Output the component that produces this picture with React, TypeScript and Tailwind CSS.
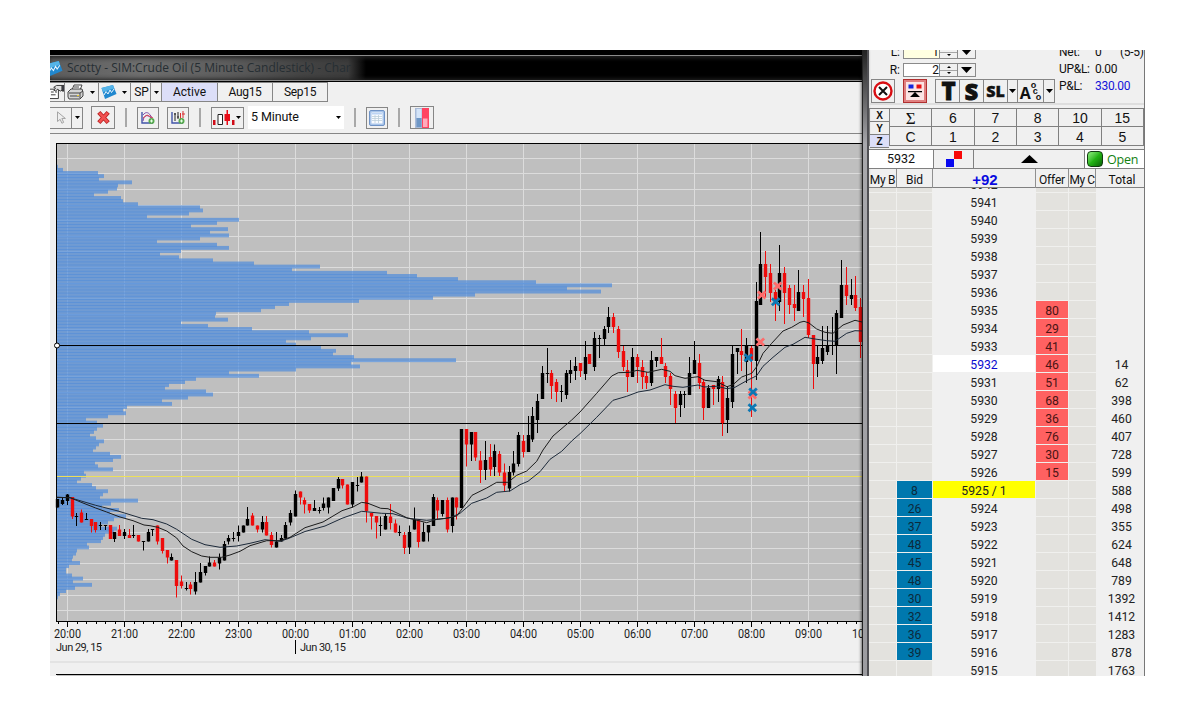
import type { ReactNode } from 'react';

// [high, body top, body bottom, low, 1 = down candle]
type Candle = [number, number, number, number, number];

const candles: Candle[] = [
  [499, 499, 507.5, 507.5, 0], [497, 500, 504, 505, 0], [494, 494.5, 501, 505, 0], [497, 497, 516.5, 519, 1],
  [513, 516, 517, 526, 0], [509.5, 512.5, 522.5, 522.5, 1], [513, 519, 520, 520, 0], [519, 519, 526, 532.5, 1],
  [522, 522, 530, 532.5, 1], [522, 525, 526, 530, 0], [525, 525, 526, 530, 0], [525, 525, 539, 539, 1],
  [532, 532, 539, 542, 0], [525, 529.5, 536, 536, 1], [529, 532, 536, 539, 0], [529, 535, 538, 538, 1],
  [525, 535, 536, 538, 0], [535, 535, 541.5, 541.5, 1], [541, 541, 542, 550.5, 0], [529, 532, 541.5, 541.5, 0],
  [529, 529, 530, 536, 0], [525.5, 525.5, 541.5, 544.5, 1], [538, 538, 551, 553.5, 1], [550, 550, 557.5, 563.5, 1],
  [553.5, 557, 560.5, 560.5, 0], [560, 560, 586, 597.5, 1], [575.5, 581.5, 586, 588.5, 1], [582, 588, 589, 590.5, 0],
  [582, 584.5, 589, 594.5, 1], [572, 582, 591.5, 594.5, 0], [563, 572, 582.5, 582.5, 0], [566, 566, 573, 575.5, 0],
  [556.5, 562.5, 566.5, 566.5, 0], [560, 562.5, 566.5, 566.5, 1], [553.5, 557.5, 563.5, 569.5, 0], [541, 544, 560.5, 560.5, 0],
  [535, 538, 541.5, 544.5, 0], [532, 538, 539, 541.5, 0], [525.5, 532, 536, 541.5, 0], [525.5, 525.5, 532.5, 532.5, 0],
  [507, 519, 525.5, 525.5, 0], [513, 515.5, 525.5, 525.5, 1], [525.5, 525.5, 529.5, 532.5, 1], [516, 522, 529.5, 532.5, 0],
  [516, 522, 535.5, 535.5, 1], [532, 535, 545, 547.5, 1], [532, 541.5, 547.5, 547.5, 0], [535, 538, 541.5, 541.5, 0],
  [522, 525, 538.5, 538.5, 0], [510, 513, 522.5, 525.5, 0], [490.5, 494, 516.5, 516.5, 0], [491.5, 491.5, 497.5, 504.5, 1],
  [497.5, 500, 504.5, 513.5, 1], [504, 504, 510.5, 513, 1], [500, 508, 511, 511, 0], [507, 510, 511, 513.5, 0],
  [497.5, 503.5, 508, 510.5, 0], [497.5, 497.5, 507.5, 513.5, 0], [488, 488, 501, 501, 0], [477, 479, 488.5, 491, 0],
  [479, 479, 485.5, 488.5, 1], [484.5, 484.5, 504.5, 504.5, 1], [482, 482, 504.5, 507.5, 0], [477, 485, 486, 491.5, 0],
  [472, 476.5, 482.5, 482.5, 0], [476.5, 476.5, 511, 522.5, 1], [513, 513, 516.5, 529.5, 1], [516, 516, 522.5, 538.5, 1],
  [516.5, 525, 526, 536, 0], [513.5, 516, 529.5, 529.5, 0], [504, 516.5, 523, 529.5, 1], [519.5, 523.5, 532.5, 532.5, 1],
  [525.5, 532, 533, 536, 0], [532, 535, 548, 554, 1], [525.5, 532, 547.5, 554, 0], [507.5, 519.5, 529.5, 529.5, 0],
  [519.5, 519.5, 542, 547.5, 1], [522.5, 532, 541.5, 541.5, 0], [525, 525, 532.5, 541.5, 0], [494, 497, 526, 526, 0],
  [497.5, 500, 510.5, 519.5, 1], [500, 500, 514, 516.5, 0], [497.5, 500, 529.5, 532.5, 1], [497.5, 497.5, 526, 532.5, 0],
  [497.5, 497.5, 507.5, 519.5, 1], [429, 429, 508, 508, 0], [429, 429, 444.5, 466.5, 1], [432, 432, 444.5, 461, 0],
  [432, 432, 457.5, 461, 1], [451, 460.5, 470, 483, 1], [441, 460, 470, 480, 0], [444, 457, 469.5, 476, 1],
  [444.5, 451, 467, 476, 0], [451, 454, 472.5, 476, 1], [463.5, 472.5, 485.5, 491.5, 1], [466, 472, 488.5, 491.5, 0],
  [451, 463.5, 472.5, 475.5, 0], [432, 435, 464, 466.5, 0], [435, 441, 452, 457.5, 1], [416, 435, 452, 452, 0],
  [407, 416, 439.5, 442, 0], [394, 401, 420, 433, 0], [366, 373, 399, 399, 0], [348, 373, 374, 383, 0],
  [370, 373, 386, 399, 1], [379, 382, 392, 402, 1], [385, 391, 392, 402, 0], [370, 373, 395, 399, 0],
  [360, 370, 374, 383, 0], [357, 366, 371, 380, 0], [363, 363, 371, 377, 1], [341, 357, 374, 380, 0],
  [354, 354, 364, 364, 1], [332, 338, 367, 371, 0], [335, 338, 339, 358, 0], [326, 329, 339, 345, 0],
  [307, 317, 327, 333, 0], [313, 317, 327, 333, 1], [326, 329, 352, 358, 1], [346, 351, 367, 371, 1],
  [360, 370, 377, 392, 1], [348, 357, 377, 377, 0], [354, 357, 367, 383, 1], [360, 367, 377, 389, 1],
  [372, 376, 383, 389, 1], [351, 360, 383, 386, 0], [357, 357, 361, 367, 0], [338, 357, 364, 364, 1],
  [363, 366, 377, 383, 1], [373, 376, 389, 405, 1], [391, 394, 408, 423, 1], [391, 394, 405, 417, 0],
  [391, 394, 395, 408, 0], [357, 373, 395, 395, 0], [341, 360, 374, 374, 0], [354, 363, 383, 389, 1],
  [379, 382, 408, 420, 1], [385, 388, 408, 408, 0], [385, 385, 389, 405, 1], [376, 379, 389, 402, 0],
  [376, 382, 423, 436, 1], [386, 398, 420, 433, 0], [346, 354, 402, 408, 0], [348, 348, 352, 374, 0],
  [329, 351, 355, 371, 1], [338, 345, 362, 383, 0], [346, 348, 360, 417, 1], [282, 301, 361, 380, 0],
  [232, 264, 305, 305, 0], [251, 264, 277, 298, 1], [264, 273, 293, 302, 1], [290, 292, 302, 321, 1],
  [245, 273, 302, 311, 0], [267, 273, 293, 324, 1], [285, 288, 305, 314, 1], [285, 304, 308, 321, 1],
  [270, 292, 311, 311, 0], [285, 292, 299, 317, 1], [279, 298, 335, 338, 1], [335, 335, 364, 389, 1],
  [346, 357, 364, 377, 0], [326, 348, 361, 364, 0], [326, 345, 352, 355, 0], [317, 345, 346, 355, 0],
  [310, 313, 346, 374, 0], [260, 285, 318, 318, 0], [267, 285, 296, 305, 1], [279, 295, 299, 305, 0],
  [276, 295, 308, 311, 1], [298, 307, 342, 358, 1],
];

// volume at price, one entry per tick, top to bottom
const profile = [
  1, 6, 41, 47, 42, 75, 61, 60, 51, 37, 64, 66, 81, 143, 146, 132, 90, 182, 160, 134, 171, 153, 172, 143, 100, 160, 172,
  124, 103, 122, 156, 197, 263, 235, 330, 360, 401, 479, 555, 510, 544, 418, 376, 302, 232, 218, 204, 159, 158, 171, 124,
  151, 195, 252, 291, 254, 229, 239, 264, 279, 276, 297, 399, 294, 303, 239, 172, 202, 139, 128, 112, 108, 149, 156, 131,
  105, 115, 70, 66, 69, 51, 29, 40, 46, 40, 37, 33, 39, 47, 42, 39, 36, 53, 64, 56, 38, 41, 56, 27, 29, 24, 20, 35, 39,
  51, 46, 43, 81, 54, 45, 62, 53, 69, 57, 51, 43, 60, 57, 48, 46, 44, 30, 32, 20, 19, 16, 15, 23, 12, 9, 9, 15, 26, 16,
  35, 18, 9, 3, 1,
];

const fastAverage =
  '56.7,497.3 70,497.7 83,503 95.7,508 106.7,512 119,516.7 133,520.7 144,525 150,525.7 157.7,527.3 166.7,531 176.7,538 183,546 191.7,551.7 201.7,556 210,557.3 221.7,557.3 230,555 240,551.3 250,545.7 260,542.7 266.7,540.7 280,540.7 290,537.3 305,527.7 323,522 342,510.7 353,507 361.7,502.3 368,503.3 380.7,508.3 388,508.7 406.7,517.7 426.7,522.7 436.7,519.3 446.7,518.3 456.7,516 472,495.3 486.7,488 496.7,482.3 508,482.3 516.7,475.3 526.7,471 536.7,461.3 543,450 553,436 571.7,420 580,412 596.7,393.3 611.7,376 618.3,372.7 630,372.3 637,370.3 648,372.3 661.7,369.3 670,371.3 675,375.7 685,378.3 698,376.7 705,380.3 716.7,381.7 727,386.7 733,384.7 741.7,377 751.7,373.3 756.7,366.7 763,353.3 771.7,343.3 783,331 791.7,327.3 800,322.3 804,321.3 809,323 816.7,329 825,332.3 833,333.3 843,325 855,320.3 862,322';
const slowAverage =
  '56.7,497.3 70,497.7 95.7,505.3 118,511 141.7,518.3 153,519.7 166.7,524 176.7,529.3 191.7,539.3 205,544.7 220,547.3 236.7,546 250,543.3 265,539.7 280,541.3 288,538.7 305,531.5 325,526 342,518.3 361.7,511.3 381.7,513.3 393,513.7 408,518.3 426.7,520.3 440,519 450,517.7 460,513.3 471.7,503.3 486.7,498 496.7,492.3 510,491 520,484.7 528,481.3 540,471.7 550,459.3 561.7,451.3 571.7,441 580,433.7 596.7,417.3 613,400.3 626.7,396.3 638,392 650,390 665,384.7 673,386.3 683,387.3 698,385 704,387 716.7,386.3 727,388.7 735,387.3 746.7,380.7 756.7,375.7 763,366.3 773,357.3 785,347.3 793,344.3 805,337.3 815,339 826.7,340.7 835,341.3 846.7,333.3 855,330.7 862,331';

const fills = [
  { x: 761.7, y: 295, color: '#ff6b6b' },
  { x: 777.7, y: 286, color: '#ff6b6b' },
  { x: 760.3, y: 342, color: '#ff6b6b' },
  { x: 752.3, y: 395, color: '#ff6b6b' },
  { x: 775.7, y: 301.7, color: '#0d78b4' },
  { x: 748.3, y: 357.7, color: '#0d78b4' },
  { x: 753, y: 392, color: '#0d78b4' },
  { x: 752.3, y: 407.7, color: '#0d78b4' },
];

const hours = ['20', '21', '22', '23', '00', '01', '02', '03', '04', '05', '06', '07', '08', '09', '10'];

const offers: Record<number, number> = {
  5935: 80, 5934: 29, 5933: 41, 5932: 46, 5931: 51, 5930: 68, 5929: 36, 5928: 76, 5927: 30, 5926: 15,
};
const bids: Record<number, number> = {
  5925: 8, 5924: 26, 5923: 37, 5922: 48, 5921: 45, 5920: 48, 5919: 30, 5918: 32, 5917: 36, 5916: 39,
};
const totals: Record<number, number> = {
  5932: 14, 5931: 62, 5930: 398, 5929: 460, 5928: 407, 5927: 728, 5926: 599, 5925: 588, 5924: 498, 5923: 355,
  5922: 624, 5921: 648, 5920: 789, 5919: 1392, 5918: 1412, 5917: 1283, 5916: 878, 5915: 1763,
};
const prices = Array.from({ length: 28 }, (_, i) => 5942 - i);

function hourX(i: number) {
  return Math.round(67.3 + i * 57);
}

function Chart() {
  return (
    <svg width="812" height="542" viewBox="50 134 812 542" className="block" fontFamily="Roboto, sans-serif">
      <rect x="56" y="143" width="806" height="478" fill="#bfbfbf" />
      <g fill="#dcdcdc" shapeRendering="crispEdges">
        {Array.from({ length: 30 }, (_, i) => (
          <rect key={i} x="57" y={Math.round(157.7 + i * 15.6)} width="805" height="1" />
        ))}
        {hours.slice(0, 14).map((h, i) => (
          <rect key={h} x={hourX(i)} y="144" width="1" height="477" />
        ))}
      </g>
      <g fill="#4f8cdc" fillOpacity="0.7">
        {profile.map((w, i) => (
          <rect key={i} x="57" y={164.8 + i * 3.12} width={w} height="3.9" />
        ))}
      </g>
      <g fill="#000" shapeRendering="crispEdges">
        <rect x="56" y="143" width="806" height="1" />
        <rect x="56" y="143" width="1" height="479" />
        <rect x="56" y="621" width="806" height="1" />
        <rect x="56" y="345" width="806" height="1" />
        <rect x="56" y="423" width="806" height="1" />
        {Array.from({ length: 85 }, (_, i) => (
          <rect key={i} x={Math.round(57.8 + i * 9.5)} y="622" width="1" height="2" />
        ))}
        {hours.slice(0, 14).map((h, i) => (
          <rect key={h} x={hourX(i)} y="622" width="1" height="5" />
        ))}
      </g>
      <rect x="57" y="476" width="805" height="1" fill="#ecdf5a" />
      <circle cx="57" cy="345.5" r="2.5" fill="#fff" stroke="#000" />
      <g>
        {candles.map(([high, top, bottom, low, down], i) => {
          const x = Math.round(57.3 + i * 4.75);
          return (
            <g key={i} fill={down ? '#ee0c0c' : '#000'}>
              <rect x={x} y={high} width="1" height={low - high} />
              <rect x={x - 1.2} y={top} width="3.4" height={bottom - top} />
            </g>
          );
        })}
      </g>
      <polyline points={slowAverage} fill="none" stroke="#1d2a3a" strokeWidth="1" />
      <polyline points={fastAverage} fill="none" stroke="#1c1c1c" strokeWidth="1" />
      {fills.map(({ x, y, color }, i) => (
        <path key={i} d={`M${x - 3.8} ${y - 3.5}l7.600 7m0 -7l-7.600 7`} stroke={color} strokeWidth="2.800" />
      ))}
      <g fontSize="12" fill="#1c1c1c">
        {hours.map((h, i) => (
          <text key={h} x={hourX(i) - 13} y="638" textLength="27" lengthAdjust="spacingAndGlyphs">
            {h}:00
          </text>
        ))}
      </g>
      <g fontSize="11" fill="#1c1c1c">
        <text x="56" y="651" textLength="46">Jun 29, 15</text>
        <text x="300" y="651" textLength="46">Jun 30, 15</text>
      </g>
      <rect x="295" y="640" width="1" height="14" fill="#000" />
      <rect x="50" y="661" width="812" height="2" fill="#e3e3e3" />
      <rect x="56" y="674" width="806" height="1" fill="#000" />
      <rect x="57" y="675" width="805" height="1" fill="#bfbfbf" />
    </svg>
  );
}

function Arrow({ up = false, className = '' }: { up?: boolean; className?: string }) {
  return (
    <svg viewBox="0 0 10 6" preserveAspectRatio="none" className={`shrink-0 ${className || 'h-[3px] w-[5px]'}`}>
      <path d={up ? 'M0 6h10L5 0z' : 'M0 0h10L5 6z'} />
    </svg>
  );
}

function TitleBar() {
  return (
    <div className="h-8 bg-black pt-[5px]">
      <div className="flex h-[26px] items-center overflow-hidden border-y border-[#8c8c8c] bg-[linear-gradient(90deg,#5c5c5c_0,#6e6e6e_90px,#5c5c5c_180px,#444_250px,#3c3c3c_298px,#000_316px)] shadow-[inset_0_4px_4px_-2px_#222,inset_0_-3px_4px_-2px_#222]">
        <ChartLogo className="-ml-1 h-[17px] w-[17px]" />
        <span className="ml-1 whitespace-nowrap font-['Open_Sans',sans-serif] text-[12px] text-[#262e33]">
          Scotty - SIM:Crude Oil (5 Minute Candlestick) - Char
        </span>
      </div>
    </div>
  );
}

function ChartLogo({ className }: { className: string }) {
  return (
    <svg viewBox="0 0 16 16" className={`shrink-0 ${className}`}>
      <path d="M0.500 4L12 1l3.500 9L4 15z" fill="#2188cf" />
      <path d="M0.500 4L12 1l1.200 3.500L2 8z" fill="#55b4e8" />
      <path d="M3 11l2-3.500 2 2.500 2-4 1.500 2.500L13 5" fill="none" stroke="#e8f6ff" />
    </svg>
  );
}

function TabRow() {
  return (
    <div className="flex h-5 text-[12px]">
      <div className="flex h-full border-y border-r border-[#868686]">
        <div className="flex w-[15px] items-center border-r border-[#868686]">
          <svg viewBox="0 0 15 16" className="h-4 w-[15px]" fill="none" stroke="#333">
            <path d="M0 5h9v10H0M1 8h3M1 11h5M5.500 8h2" fill="#fff" />
            <path d="M4 3l3-2h6v5l-2 1-3-2-2 2-2-1 2-2z" fill="#ddd" />
            <path d="M13 1h2v6h-2z" fill="#445" />
          </svg>
        </div>
        <div className="flex w-[33px] items-center justify-between pl-0.5 pr-[3px]">
          <svg viewBox="0 0 17 16" className="h-4 w-[17px]" stroke="#444" fill="#d4d4d4">
            <path d="M5 6l2-5h8l-2 5z" fill="#fff" />
            <path d="M1 8l3-3h11l1 3v4l-3 3H2l-1-2z" />
            <path d="M2 9h11l3-2M3 12h9M13 9v5M7 3h5" fill="none" />
            <path d="M10 11h2v1h-2z" fill="#f0d030" stroke="none" />
          </svg>
          <Arrow />
        </div>
      </div>
      <div className="flex w-[32px] items-center justify-between border-y border-r border-[#868686] pl-0.5 pr-[3px]">
        <ChartLogo className="h-4 w-4" />
        <Arrow />
      </div>
      <div className="flex w-[31px] items-center border-y border-r border-[#868686]">
        <span className="flex h-full w-[20px] items-center justify-center border-r border-[#868686] pl-0.5">SP</span>
        <span className="flex grow justify-center"><Arrow /></span>
      </div>
      <div className="flex w-[56px] items-center justify-center border-y border-r border-[#868686] bg-[#dcdef8]">Active</div>
      <div className="flex w-[55px] items-center justify-center border-y border-r border-[#868686] tracking-[-0.3px]">Aug15</div>
      <div className="flex w-[55px] items-center justify-center border-y border-r border-[#868686] tracking-[-0.3px]">Sep15</div>
    </div>
  );
}

function Separator({ className }: { className: string }) {
  return <div className={`h-[19px] w-0.5 shrink-0 bg-[#a8a8a8] ${className}`} />;
}

function IconButton({ className, children }: { className: string; children: ReactNode }) {
  return <div className={`flex shrink-0 items-center justify-center border border-[#868686] ${className}`}>{children}</div>;
}

function ToolRow() {
  return (
    <div className="flex h-8 items-center border-b border-[#868686]">
      <div className="flex h-[22px] w-[33px] border border-l-0 border-[#868686]">
        <div className="flex w-[22px] items-center justify-center border-r border-[#868686]">
          <svg viewBox="0 0 12 16" className="h-[14px] w-3" fill="#eee" stroke="#999">
            <path d="M2 1v11l3-2.500 2 4.500 2-1-2-4.500h4z" />
          </svg>
        </div>
        <div className="flex grow items-center justify-center"><Arrow /></div>
      </div>
      <IconButton className="ml-2 h-[23px] w-6">
        <svg viewBox="0 0 16 16" className="h-[15px] w-[15px]">
          <path d="M3 2.500l10 11M13 2.500L3 13.500" stroke="#b82222" strokeWidth="4.600" />
          <path d="M3.500 3l9 10M12.500 3l-9 10" stroke="#f25050" strokeWidth="2.800" />
        </svg>
      </IconButton>
      <Separator className="ml-[10px]" />
      <IconButton className="ml-[10px] h-[22px] w-[22px]">
        <svg viewBox="0 0 16 16" className="h-4 w-4" fill="none">
          <path d="M2 2v11h11" stroke="#4254a8" strokeWidth="1.400" />
          <path d="M3 5c3-4 6-3 9 3M3 11C4 5 7 4 11 8" stroke="#7a4aa8" />
          <path d="M3 8l4-3 6 3" stroke="#e04050" />
          <circle cx="11.500" cy="11" r="3" fill="#56a84e" />
          <path d="M10 11h3m-1.500-1.500v3" stroke="#e8ffe8" />
        </svg>
      </IconButton>
      <IconButton className="ml-2 h-[22px] w-[22px]">
        <svg viewBox="0 0 16 16" className="h-4 w-4" fill="none">
          <path d="M2 2v11h11" stroke="#4254a8" strokeWidth="1.400" />
          <path d="M5 3v8M4 4h2M8 2v7M7 7h2" stroke="#222" />
          <path d="M10.500 3v6M13 1v7M12 4h3" stroke="#d83030" />
          <circle cx="11.500" cy="11" r="3" fill="#56a84e" />
          <path d="M10 11h3m-1.500-1.500v3" stroke="#e8ffe8" />
        </svg>
      </IconButton>
      <Separator className="ml-[10px]" />
      <IconButton className="ml-[10px] h-[22px] w-[33px] justify-start!">
        <svg viewBox="0 0 24 20" className="h-5 w-6 shrink-0">
          <path d="M1 12h2.500v5H1zM20 12h2.500v5H20z" fill="#d00c18" />
          <path d="M6 6.500h4.500v10H6z" fill="#fff" stroke="#222" />
          <path d="M12.500 6h5.500v7h-5.500zM14.500 2h1.500v15h-1.500z" fill="#e80c18" />
        </svg>
        <Arrow />
      </IconButton>
      <div className="ml-1 flex h-[23px] w-[96px] items-center justify-between bg-white pl-[3px] pr-[3px]">
        <span className="text-[12.500px] tracking-[-0.1px]">5 Minute</span>
        <Arrow />
      </div>
      <Separator className="ml-[10px]" />
      <IconButton className="ml-[10px] h-[22px] w-[22px]">
        <svg viewBox="0 0 16 16" className="h-4 w-4">
          <rect x="0.500" y="0.500" width="15" height="15" rx="1.500" fill="#a9c5ea" stroke="#6f93c6" />
          <path d="M2.500 2.500h11v11h-11z" fill="#f8fbff" />
          <path d="M3 6.500h10M3 8.500h10M3 10.500h10M6 5v8M9.500 5v8" stroke="#bccfda" strokeWidth="0.800" />
          <path d="M3 3h10v1.500H3z" fill="#bcd4f4" />
        </svg>
      </IconButton>
      <Separator className="ml-[10px]" />
      <IconButton className="ml-[10px] h-[23px] w-6">
        <svg viewBox="0 0 14 20" className="h-5 w-[14px]">
          <path d="M0 0h14v20H0z" fill="#a9bbd8" />
          <path d="M1.500 1h5v9h-5z" fill="#d4e4f8" />
          <path d="M1.500 10h5v9h-5z" fill="#6e97c6" />
          <path d="M7 0h7v20H7z" fill="#ff4462" />
          <path d="M8 10.500h4.500V19H8z" fill="#ffabbc" />
        </svg>
      </IconButton>
    </div>
  );
}

function QtyRow({ label, value, tint }: { label: string; value: string; tint: string }) {
  return (
    <div className="flex h-[14px] items-center">
      <span className="w-[31px] text-right">{label}</span>
      <div className={`ml-[3px] flex h-full w-[37px] items-center justify-end border border-[#8a8a8a] ${tint}`}>{value}</div>
      <div className="flex h-full w-[17px] flex-col items-center justify-evenly border-y border-[#8a8a8a]">
        <Arrow up className="h-[2px] w-[4px]" />
        <span className="h-px w-full bg-[#a5a5a5]" />
        <Arrow className="h-[2px] w-[4px]" />
      </div>
      <div className="flex h-full w-[19px] items-center justify-center border border-[#8a8a8a]">
        <Arrow className="h-[6px] w-[11px]" />
      </div>
    </div>
  );
}

function OrderControls() {
  return (
    <div className="relative h-[55px] overflow-hidden border-b-2 border-[#dedede] text-[12px]">
      <div className="-mt-[5px] flex justify-between">
        <div className="flex flex-col gap-1">
          <QtyRow label="L:" value="1" tint="bg-[#ffffe1]" />
          <QtyRow label="R:" value="2" tint="bg-white" />
        </div>
        <div className="w-[85px] leading-[17px] tracking-[-0.3px]">
          <div className="-mt-px flex h-[17px] whitespace-nowrap">
            <span className="w-9">Net:</span><span className="w-[25px]">0</span><span>(5-5)</span>
          </div>
          <div className="flex"><span className="w-9">UP&amp;L:</span>0.00</div>
          <div className="flex"><span className="w-9">P&amp;L:</span><span className="text-[#1414d8]">330.00</span></div>
        </div>
      </div>
      {/* button strip overlaps the P&L column's last line */}
      <div className="absolute left-[2px] top-[29px] flex h-6 font-['Open_Sans',sans-serif] font-extrabold">
        <IconButton className="w-6">
          <svg viewBox="0 0 20 20" className="h-5 w-5" fill="none">
            <circle cx="10" cy="10" r="8.500" fill="#fff" stroke="#d80d12" strokeWidth="2.400" />
            <path d="M6 6l8 8m0-8l-8 8" stroke="#111" strokeWidth="2" />
          </svg>
        </IconButton>
        <div className="ml-2 flex w-6 items-center justify-center border border-[#b03030] bg-[#fbe4e4] shadow-[inset_0_0_0_2px_#e08080]">
          <svg viewBox="0 0 16 16" className="h-4 w-4">
            <path d="M1.500 1.500h5v4h-5z" fill="#1226dd" />
            <path d="M9.500 1.500h5v4h-5z" fill="#e81212" />
            <path d="M1 8h14v1.300H1zM3 14h10L8 9z" />
          </svg>
        </div>
        <IconButton className="ml-2 w-[25px] pl-0.5 text-[24px] font-black leading-none"><span className="[-webkit-text-stroke:0.8px_#111]">T</span></IconButton>
        <IconButton className="-ml-px w-[25px] text-[23px] leading-none"><span className="[-webkit-text-stroke:1px_#111]">S</span></IconButton>
        <IconButton className="-ml-px w-[25px] text-[16px] leading-none"><span className="[-webkit-text-stroke:0.4px_#111]">SL</span></IconButton>
        <IconButton className="-ml-px w-[11px]"><Arrow className="h-1 w-[7px]" /></IconButton>
        <IconButton className="-ml-px w-[27px]">
          <span className="pt-1 text-[16px] font-bold leading-none">A</span>
          <span className="flex flex-col font-['Liberation_Sans',sans-serif] text-[9px] font-bold leading-[6px]">
            <span>o</span><span className="pl-[2px]">c</span><span className="pl-[5px]">o</span>
          </span>
        </IconButton>
        <IconButton className="-ml-px w-[12px]"><Arrow className="h-1 w-[7px]" /></IconButton>
      </div>
    </div>
  );
}

function Keypad() {
  const keys = ['Σ', '6', '7', '8', '10', '15', 'C', '1', '2', '3', '4', '5'];
  return (
    <div className="mt-[3px] flex h-[38px] border-t border-[#808080] font-['Liberation_Sans',sans-serif]">
      <div className="flex w-[20px] flex-col border-l border-[#808080] text-[10px] font-bold leading-none">
        <span className="flex grow items-center justify-center border-b border-[#808080] pt-0.5">X</span>
        <span className="flex grow items-center justify-center border-b border-[#808080] pt-0.5">Y</span>
        <span className="flex grow items-center justify-center border-b border-[#808080] bg-[#dcdef8] pt-0.5">Z</span>
      </div>
      <div className="grid grow grid-cols-6 grid-rows-2 border-l border-[#808080] text-[14px]">
        {keys.map((k) => (
          <span
            key={k}
            className={`flex items-center justify-center border-b border-r border-[#808080] pt-px leading-none ${k === 'Σ' ? "font-['Liberation_Serif',serif] text-[17px]" : ''}`}
          >
            {k}
          </span>
        ))}
      </div>
    </div>
  );
}

function StatusRow() {
  return (
    <div className="mt-[3px] flex h-[20px] border-y border-[#808080]">
      <div className="flex w-[64px] items-center justify-center bg-white pt-0.5 text-[12.500px]">5932</div>
      <div className="flex w-[41px] items-center justify-center border-x border-[#808080]">
        <svg viewBox="0 0 16 16" className="h-4 w-4">
          <path d="M8 0h8v8H8z" fill="#f80808" />
          <path d="M0 8h8v8H0z" fill="#0808f0" />
        </svg>
      </div>
      <div className="flex w-[110px] items-center justify-center pt-px"><Arrow up className="h-2 w-[17px]" /></div>
      <div className="flex grow items-center border-l border-[#808080] bg-white pl-0.5">
        <span className="h-4 w-4 rounded-[4px] border border-[#123a12] bg-linear-to-br from-[#8cf07c] via-[#22b414] to-[#0a6408]" />
        <span className="ml-1 pt-[3px] font-['Open_Sans',sans-serif] text-[12.500px] tracking-[-0.2px] text-[#128012]">Open</span>
      </div>
    </div>
  );
}

const ladderCols = 'grid grid-cols-[28px_36px_103px_33px_27px_48px]';

function Ladder() {
  return (
    <>
      <div className={`${ladderCols} h-[19px] border-b border-[#808080] text-center text-[12px] leading-[22px] whitespace-nowrap`}>
        <span className="border-r border-[#909090] tracking-[-0.3px]">My B</span>
        <span className="border-r border-[#909090]">Bid</span>
        <span className="border-r border-[#909090] pl-0.5 font-['Liberation_Sans',sans-serif] text-[15px] font-bold leading-[21px] text-[#0a0ae0]">+92</span>
        <span className="border-r border-[#909090] tracking-[-0.2px]">Offer</span>
        <span className="border-r border-[#909090] tracking-[-0.5px]">My C</span>
        <span className="pl-1">Total</span>
      </div>
      <div className="grow overflow-hidden">
        <div className="-mt-[14px] text-center text-[12.200px] leading-[17px] text-[#222]">
          {prices.map((p) => (
            <div key={p} className={`${ladderCols} h-[18px] grid-rows-[18px] *:border-t *:pt-[2px]`}>
              <span className="border-r border-[#f0f0ee] bg-[#e3e2de]" />
              <span className={`border-r border-[#f0f0ee] text-[#0c2a3c] ${bids[p] ? 'bg-[#0078ae]' : 'bg-[#e3e2de]'}`}>{bids[p]}</span>
              <span
                className={`border-r border-[#f0f0f0] ${p === 5925 ? 'bg-[#ffff00]' : p === 5932 ? 'bg-white text-[#0a0ad0]' : ''}`}
              >
                {p === 5925 ? '5925 / 1' : p}
              </span>
              <span className={`border-r border-[#f0f0ee] text-[#4a1414] ${offers[p] ? 'bg-[#ff6161]' : 'bg-[#e3e2de]'}`}>{offers[p]}</span>
              <span className="border-[#f0f0ee] bg-[#e3e2de]" />
              <span className="border-transparent pl-[3px]">{totals[p]}</span>
            </div>
          ))}
        </div>
      </div>
    </>
  );
}

export default function App() {
  return (
    <div className="h-[726px] w-[1195px] overflow-hidden bg-white p-[50px] font-[Roboto,sans-serif] text-[#111]">
      <div className="flex h-[626px] w-[1095px] overflow-hidden bg-[#f0f0f0]">
        <div className="w-[812px] shrink-0 overflow-hidden">
          <TitleBar />
          <TabRow />
          <ToolRow />
          <Chart />
        </div>
        <div className="w-[7px] shrink-0 border-l border-r-2 border-l-[#222] border-r-[#505054] bg-linear-to-b from-[#222] via-[#a8a8ac] via-15% to-[#9c9ca0] shadow-[-1px_0_3px_#0008]" />
        <div className="flex w-[276px] shrink-0 flex-col overflow-hidden border-r border-[#777]">
          <OrderControls />
          <Keypad />
          <StatusRow />
          <Ladder />
        </div>
      </div>
    </div>
  );
}
